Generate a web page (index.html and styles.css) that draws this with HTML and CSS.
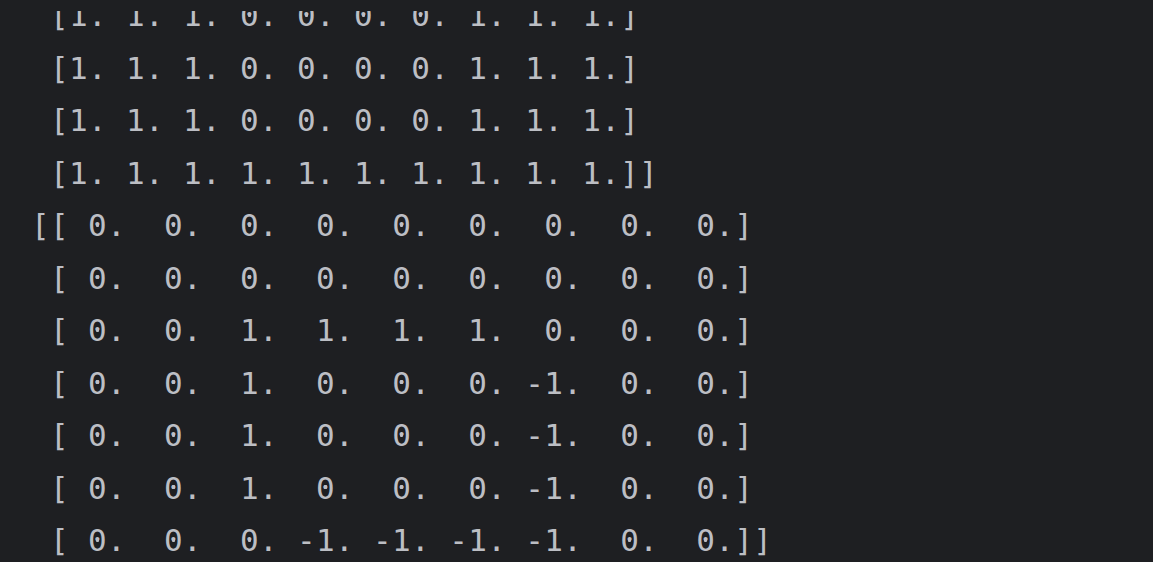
FILE: index.html
```html
<!DOCTYPE html>
<html>
<head>
<meta charset="utf-8">
<link rel="stylesheet" href="styles.css">
</head>
<body>
<div class="console">
<div class="top-mask"></div>
<pre class="output"> [1. 1. 1. <span class="z">0</span>. <span class="z">0</span>. <span class="z">0</span>. <span class="z">0</span>. 1. 1. 1.]
 [1. 1. 1. <span class="z">0</span>. <span class="z">0</span>. <span class="z">0</span>. <span class="z">0</span>. 1. 1. 1.]
 [1. 1. 1. <span class="z">0</span>. <span class="z">0</span>. <span class="z">0</span>. <span class="z">0</span>. 1. 1. 1.]
 [1. 1. 1. 1. 1. 1. 1. 1. 1. 1.]]
[[ <span class="z">0</span>.  <span class="z">0</span>.  <span class="z">0</span>.  <span class="z">0</span>.  <span class="z">0</span>.  <span class="z">0</span>.  <span class="z">0</span>.  <span class="z">0</span>.  <span class="z">0</span>.]
 [ <span class="z">0</span>.  <span class="z">0</span>.  <span class="z">0</span>.  <span class="z">0</span>.  <span class="z">0</span>.  <span class="z">0</span>.  <span class="z">0</span>.  <span class="z">0</span>.  <span class="z">0</span>.]
 [ <span class="z">0</span>.  <span class="z">0</span>.  1.  1.  1.  1.  <span class="z">0</span>.  <span class="z">0</span>.  <span class="z">0</span>.]
 [ <span class="z">0</span>.  <span class="z">0</span>.  1.  <span class="z">0</span>.  <span class="z">0</span>.  <span class="z">0</span>. -1.  <span class="z">0</span>.  <span class="z">0</span>.]
 [ <span class="z">0</span>.  <span class="z">0</span>.  1.  <span class="z">0</span>.  <span class="z">0</span>.  <span class="z">0</span>. -1.  <span class="z">0</span>.  <span class="z">0</span>.]
 [ <span class="z">0</span>.  <span class="z">0</span>.  1.  <span class="z">0</span>.  <span class="z">0</span>.  <span class="z">0</span>. -1.  <span class="z">0</span>.  <span class="z">0</span>.]
 [ <span class="z">0</span>.  <span class="z">0</span>.  <span class="z">0</span>. -1. -1. -1. -1.  <span class="z">0</span>.  <span class="z">0</span>.]]</pre>
</div>
</body>
</html>
```

FILE: styles.css
```css
html, body {
  margin: 0;
  padding: 0;
  background: #1e1f22;
  height: 100%;
  overflow: hidden;
}

.console {
  position: relative;
  height: 562px;
  overflow: hidden;
  background: #1e1f22;
}

.top-mask {
  position: absolute;
  left: 0;
  top: 0;
  width: 100%;
  height: 11px;
  background: #1e1f22;
  z-index: 1;
}

.output {
  margin: -11px 0 0 0;
  padding: 0 0 0 31px;
  font-family: "DejaVu Sans Mono", monospace;
  font-size: 31px;
  letter-spacing: 0.34px;
  line-height: 52.5px;
  color: #bcbec4;
  white-space: pre;
}

.z {
  position: relative;
}

.z::after {
  content: "";
  position: absolute;
  left: 50%;
  top: 15.5px;
  width: 3px;
  height: 4px;
  margin-left: -1.8px;
  background: currentColor;
  border-radius: 1px;
}
```
